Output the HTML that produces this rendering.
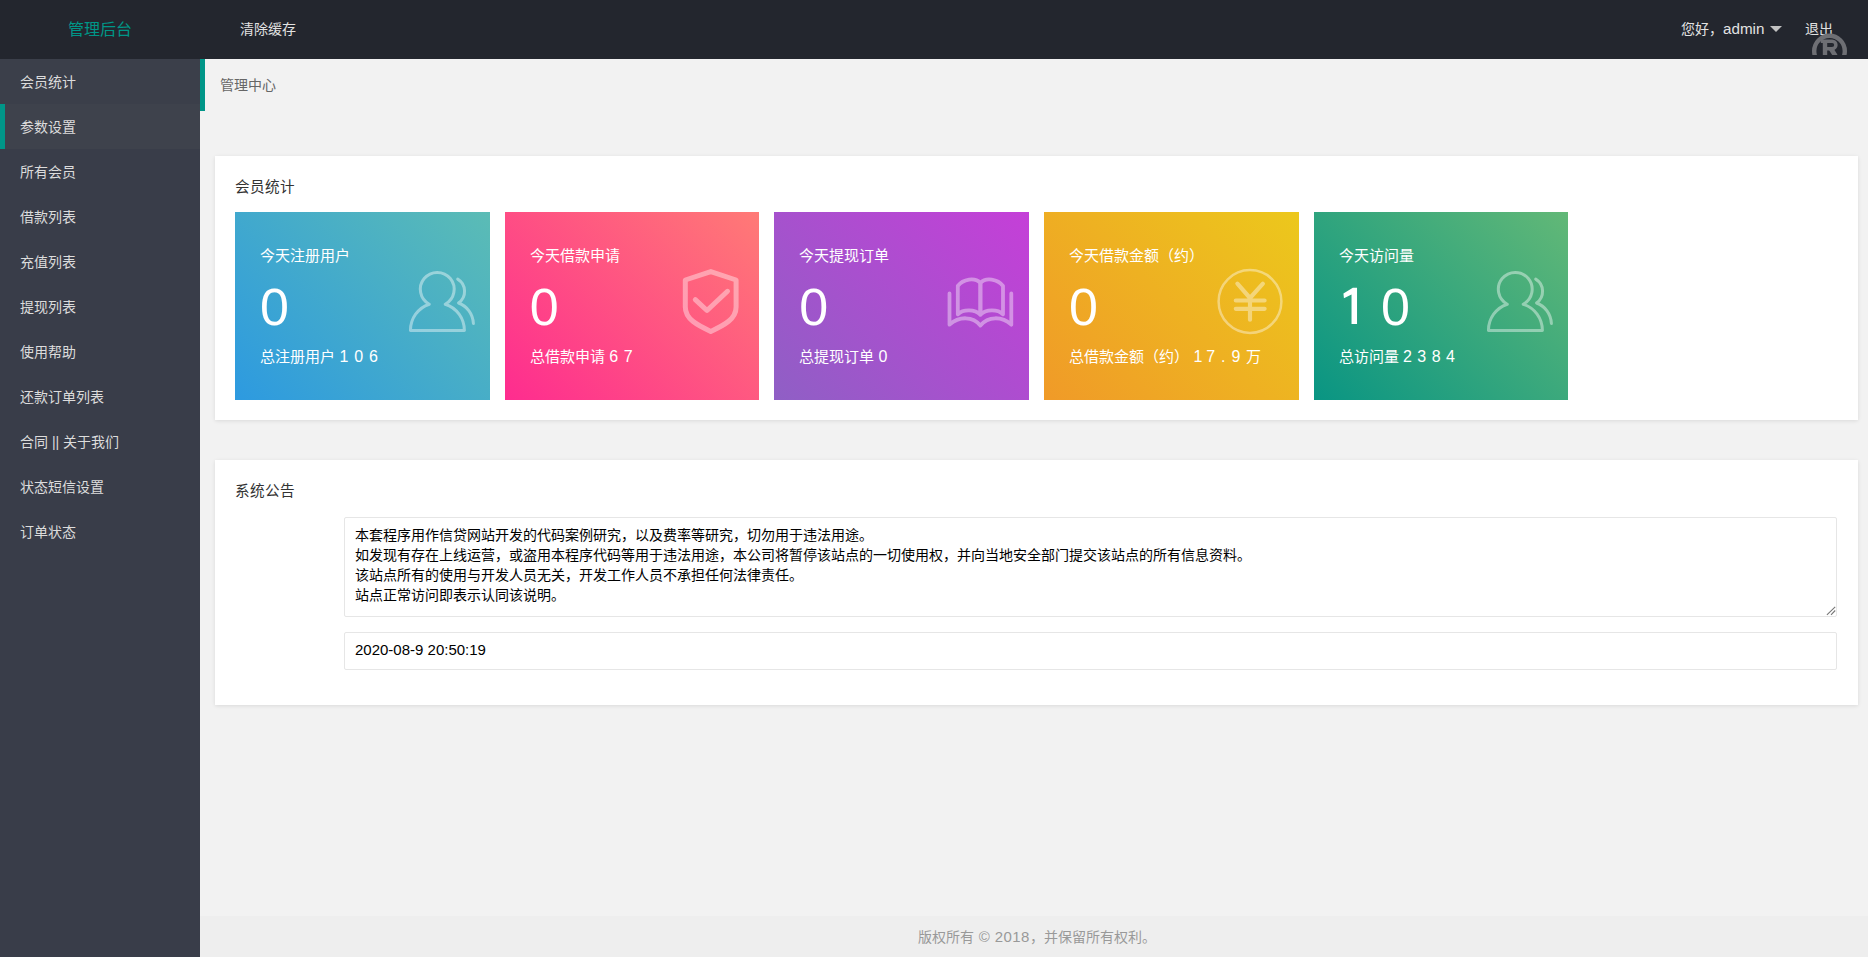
<!DOCTYPE html>
<html lang="zh-CN">
<head>
<meta charset="utf-8">
<title>管理后台</title>
<style>
*{margin:0;padding:0;box-sizing:border-box;}
html,body{width:1868px;height:957px;overflow:hidden;}
body{position:relative;background:#f2f2f2;font-family:"Liberation Sans",sans-serif;font-size:14px;color:#666;}
.abs{position:absolute;white-space:nowrap;}
#header{position:absolute;left:0;top:0;width:1868px;height:59px;background:#23262e;}
#logo{left:0;top:18px;width:200px;text-align:center;color:#009688;font-size:16px;line-height:24px;}
#clear{left:240px;top:19px;color:#e2e2e2;font-size:14px;line-height:20px;}
#hello{left:1681px;top:19px;color:#e2e2e2;font-size:14px;line-height:20px;}
#caret{left:1770px;top:26px;width:0;height:0;border-left:6px solid transparent;border-right:6px solid transparent;border-top:6px solid #c2c2c2;}
#logout{left:1805px;top:19px;color:#e2e2e2;font-size:14px;line-height:20px;}
#reg{left:1810px;top:32px;width:40px;height:22.5px;overflow:hidden;}
#side{position:absolute;left:0;top:59px;width:200px;height:898px;background:#393d49;}
.nav{position:absolute;left:0;width:200px;height:45px;color:#dcdcdc;line-height:47px;padding-left:20px;font-size:14px;}
.nav.hl{background:#3b3f4a;}
.nav.hl2{background:#3e424c;}
.nav.bar:before{content:"";position:absolute;left:0;top:0;width:5px;height:45px;background:#009688;}
#crumb{position:absolute;left:200px;top:59px;width:1668px;height:52px;border-left:5px solid #009688;}
#crumb span{position:absolute;left:15px;top:16px;color:#666;line-height:20px;}
.panel{position:absolute;left:215px;width:1643px;background:#fff;box-shadow:0 1px 4px 0 rgba(0,0,0,.1);}
.ptitle{position:absolute;left:20px;color:#333;line-height:20px;font-size:14.6px;}
.card{position:absolute;top:56px;width:254.67px;height:188px;color:#fff;}
.card .t1{position:absolute;left:25px;top:34px;font-size:15px;line-height:20px;}
.card .big{position:absolute;left:25px;top:63px;font-size:52px;line-height:64px;}
.card .t2{position:absolute;left:25px;top:135px;font-size:15px;line-height:20px;}
.card i{display:inline-block;font-style:normal;text-align:center;}
.card .t2 i{font-size:16px;}
.card svg{position:absolute;left:164.8px;top:50px;width:80px;height:80px;}
#ta{position:absolute;left:129px;top:57px;width:1493px;height:100px;border:1px solid #e6e6e6;border-radius:2px;padding:7px 10px;color:#000;line-height:20px;}
#inp{position:absolute;left:129px;top:172px;width:1493px;height:38px;border:1px solid #e6e6e6;border-radius:2px;padding:0 10px;color:#000;line-height:33px;font-size:15px;}
#grip{position:absolute;left:1610px;top:144.3px;width:12px;height:12px;}
#footer{position:absolute;left:200px;top:916px;width:1668px;height:41px;background:#eee;text-align:center;color:#999;line-height:41px;padding-left:6px;}
</style>
</head>
<body>
<div id="header">
  <div id="logo" class="abs">管理后台</div>
  <div id="clear" class="abs">清除缓存</div>
  <div id="hello" class="abs">您好，<span style="font-size:15.2px">admin</span></div>
  <div id="caret" class="abs"></div>
  <div id="logout" class="abs">退出</div>
  <div id="reg" class="abs"><svg style="display:block" width="40" height="40" viewBox="0 0 40 40" fill="none" stroke="#6e6f74"><circle cx="19.5" cy="19.1" r="15.3" stroke-width="4.4"/><path d="M15,9 L15,24" stroke-width="4.4"/><path d="M10.8,9.2 L22.15,9.2 A3.75,3.75 0 0 1 22.15,16.7 L15,16.7" stroke-width="3.5"/><path d="M20.5,16 L25.5,24" stroke-width="4.6"/></svg></div>
</div>
<div id="side">
  <div class="nav hl" style="top:0">会员统计</div>
  <div class="nav hl2 bar" style="top:45px">参数设置</div>
  <div class="nav" style="top:90px">所有会员</div>
  <div class="nav" style="top:135px">借款列表</div>
  <div class="nav" style="top:180px">充值列表</div>
  <div class="nav" style="top:225px">提现列表</div>
  <div class="nav" style="top:270px">使用帮助</div>
  <div class="nav" style="top:315px">还款订单列表</div>
  <div class="nav" style="top:360px">合同 || 关于我们</div>
  <div class="nav" style="top:405px">状态短信设置</div>
  <div class="nav" style="top:450px">订单状态</div>
</div>
<div id="crumb"><span>管理中心</span></div>

<div class="panel" style="top:156px;height:264px;">
  <div class="ptitle" style="top:21px;">会员统计</div>
<!--CARDS-->
  <div class="card" style="left:20px;background:linear-gradient(45deg,#2d9ae0,#5bbcb5);"><div class="t1">今天注册用户</div><div class="big"><i style="width:29px">0</i></div><div class="t2">总注册用户<i style="margin-left:1.6px;width:14.75px">1</i><i style="width:14.75px">0</i><i style="width:14.75px">6</i></div><svg viewBox="0 0 80 80" fill="none" stroke="#fff" opacity="0.42" stroke-width="3" stroke-linecap="round" stroke-linejoin="round"><path d="M29.3,42.2 A16.9,16.9 0 1 1 45.2,42.2 A27,27.5 0 0 1 64.4,68.6 L10.45,68.6 A27,27.5 0 0 1 29.3,42.2 Z"/><path d="M57.7,17.1 A14.3,14.3 0 0 1 58.5,41 C67,44 73,52 73.4,61.5"/></svg></div>
  <div class="card" style="left:289.67px;background:linear-gradient(45deg,#fe2c8f,#ff7a76);"><div class="t1">今天借款申请</div><div class="big"><i style="width:29px">0</i></div><div class="t2">总借款申请<i style="margin-left:1.85px;width:14.5px">6</i><i style="width:14.5px">7</i></div><svg viewBox="0 0 80 80" fill="none" stroke="#fff" opacity="0.4" stroke-width="5" stroke-linecap="round" stroke-linejoin="round"><path d="M41.8,9.6 L16.3,18 L16.3,45 C16.3,57 28,63 41.8,69.4 C55.6,63 67.1,57 67.1,45 L67.1,18 Z"/><path d="M26.3,37.6 L38,48.5 L58.5,29.3"/></svg></div>
  <div class="card" style="left:559.33px;background:linear-gradient(45deg,#8f5fc5,#c53fd8);"><div class="t1">今天提现订单</div><div class="big"><i style="width:29px">0</i></div><div class="t2">总提现订单<i style="margin-left:1.35px;width:14.5px">0</i></div><svg viewBox="0 0 80 80" fill="none" stroke="#fff" opacity="0.4" stroke-width="3.8" stroke-linecap="round" stroke-linejoin="round"><path d="M10.5,31.4 L10.5,62.7 C20,54 34,54 41.4,63.5 C49,54 63,54 72.3,62.7 L72.3,31.4"/><path d="M18.8,52.3 L18.8,24 C24,17 36,15 41.4,21 L41.4,52.7 C36,47 24,47 18.8,52.3 Z"/><path d="M64,52.3 L64,24 C58.8,17 46.8,15 41.4,21 L41.4,52.7 C46.8,47 58.8,47 64,52.3 Z"/></svg></div>
  <div class="card" style="left:829px;background:linear-gradient(45deg,#f09a28,#ecc81c);"><div class="t1">今天借款金额（约）</div><div class="big"><i style="width:29px">0</i></div><div class="t2">总借款金额（约）<i style="margin-left:2.7px;width:12.67px">1</i><i style="width:12.67px">7</i><i style="width:12.67px">.</i><i style="width:12.67px">9</i><span style="margin-left:3.4px">万</span></div><svg viewBox="0 0 80 80" fill="none" stroke="#fff" opacity="0.4" stroke-linecap="round" stroke-linejoin="round"><circle cx="41" cy="39.5" r="31.4" stroke-width="2.5"/><path stroke-width="4.2" d="M28.4,21.7 L41,36 L53.9,21.7 M26.8,38.5 L55.6,38.5 M26.8,46.8 L55.6,46.8 M41,36 L41,57.7"/></svg></div>
  <div class="card" style="left:1098.67px;background:linear-gradient(45deg,#099583,#62b877);"><div class="t1">今天访问量</div><div class="big"><i style="width:29px;margin-left:42.4px">0</i></div><div class="t2">总访问量<i style="margin-left:1.6px;width:14.37px">2</i><i style="width:14.37px">3</i><i style="width:14.37px">8</i><i style="width:14.37px">4</i></div><svg viewBox="0 0 80 80" fill="none" stroke="#fff" opacity="0.42" stroke-width="3" stroke-linecap="round" stroke-linejoin="round"><path d="M29.3,42.2 A16.9,16.9 0 1 1 45.2,42.2 A27,27.5 0 0 1 64.4,68.6 L10.45,68.6 A27,27.5 0 0 1 29.3,42.2 Z"/><path d="M57.7,17.1 A14.3,14.3 0 0 1 58.5,41 C67,44 73,52 73.4,61.5"/></svg><svg style="position:absolute;left:0;top:0;width:100px;height:120px" viewBox="0 0 100 120"><polygon fill="#fff" points="43.03,75.80 43.03,111.90 37.53,111.90 37.53,82.50 29.93,86.30 29.43,81.60 38.83,75.80"/></svg></div>
<!--/CARDS-->
</div>

<div class="panel" style="top:460px;height:245px;">
  <div class="ptitle" style="top:21px;">系统公告</div>
  <div id="ta">本套程序用作信贷网站开发的代码案例研究，以及费率等研究，切勿用于违法用途。<br>如发现有存在上线运营，或盗用本程序代码等用于违法用途，本公司将暂停该站点的一切使用权，并向当地安全部门提交该站点的所有信息资料。<br>该站点所有的使用与开发人员无关，开发工作人员不承担任何法律责任。<br>站点正常访问即表示认同该说明。</div>
  <svg id="grip" viewBox="0 0 12 12" stroke="#777" stroke-width="1.1" fill="none"><path d="M1.9,10.9 L10.2,2.9 M6,10.9 L10.2,6.5"/></svg>
  <div id="inp">2020-08-9 20:50:19</div>
</div>

<div id="footer">版权所有<span style="font-size:15px;letter-spacing:0.4px"> © 2018</span>，并保留所有权利。</div>
</body>
</html>
